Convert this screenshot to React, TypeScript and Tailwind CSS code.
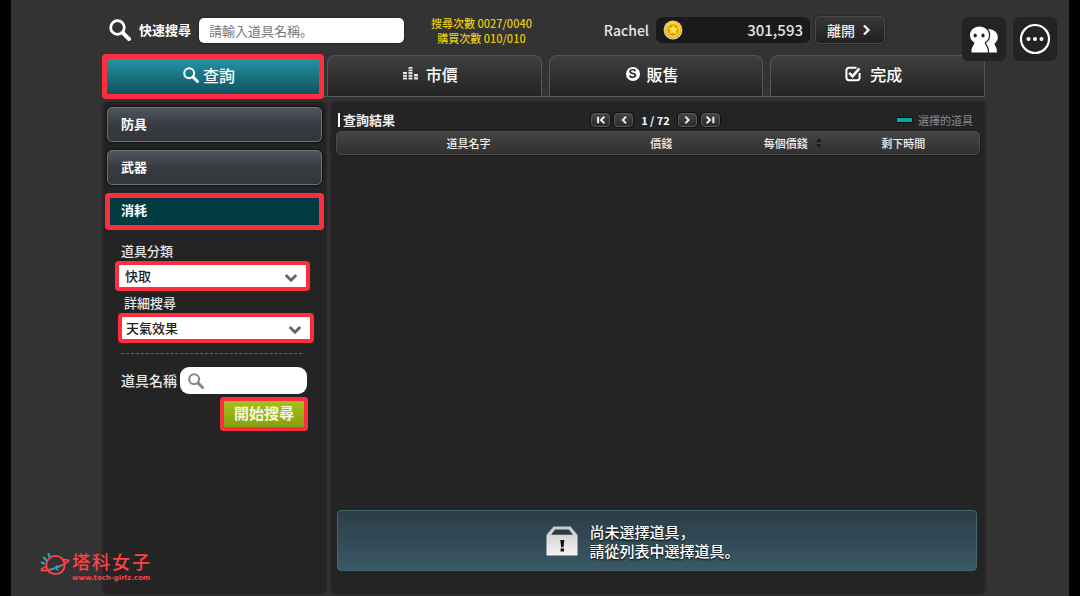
import { useState } from "react";
import type { ReactNode } from "react";

const panelShadow = "bg-[#242424] rounded-md shadow-[0_0_3px_#1a1a1a]";

function SearchIcon({ className }: { className: string }) {
  return (
    <svg viewBox="0 0 22 22" fill="none" stroke="currentColor" className={className} aria-hidden="true">
      <circle cx="8.5" cy="8.5" r="6.8" strokeWidth="2.8" />
      <path d="M13.6 13.6 20 20" strokeWidth="4" strokeLinecap="round" />
    </svg>
  );
}

function BarsIcon() {
  return (
    <svg viewBox="0 0 16 14" className="h-3.5 w-4 fill-[#e4e4e4]" aria-hidden="true">
      <path d="M0 5h4v2H0zM0 7.8h4v2H0zM0 10.6h4v2H0zM5.5 0h4v1.8h-4zM5.5 2.5h4v1.8h-4zM5.5 5h4v2h-4zM5.5 7.8h4v2h-4zM5.5 10.6h4v2h-4zM11 7h4v2.4h-4zM11 10.2h4v2.4h-4z" />
    </svg>
  );
}

function SaleIcon() {
  return (
    <span className="flex size-3.5 items-center justify-center rounded-full bg-white font-['Liberation_Sans',sans-serif] text-[12px] leading-3 font-bold text-[#222]">
      S
    </span>
  );
}

function CheckIcon() {
  return (
    <svg viewBox="0 0 16 16" fill="none" stroke="#fff" className="size-4" aria-hidden="true">
      <path d="M11.5 1.8H4A2.6 2.6 0 0 0 1.4 4.4v7.2A2.6 2.6 0 0 0 4 14.2h8a2.6 2.6 0 0 0 2.6-2.6V7" strokeWidth="2" />
      <path d="M4.2 6.8 7.6 10.4 14.4 2.4" strokeWidth="2.6" />
    </svg>
  );
}

function CoinIcon() {
  return (
    <svg viewBox="0 0 20 20" className="size-5" aria-hidden="true">
      <circle cx="10" cy="10" r="9.4" fill="#dcdcc8" />
      <circle cx="10" cy="10" r="8.5" fill="#f3a400" />
      <circle cx="10" cy="9.6" r="7.6" fill="#ffd93a" />
      <circle cx="10" cy="10" r="6" fill="#e99a0c" />
      <path d="m10.6 4.4 1.3 3.3 3.6.5-2.7 2.4.6 3.8-3.3-1.9-3.4 1.6.9-3.6-2.4-2.7 3.6-.3z" fill="#ffe052" />
    </svg>
  );
}

function FriendsIcon() {
  return (
    <svg viewBox="0 0 30 28" className="h-7 w-[30px] fill-white" aria-hidden="true">
      <path d="M19.5 4c5.5 0 9.3 3.7 9.3 8.3 0 2.7-1.3 4.7-3.3 6.2.2 2.5 2.3 4.2 2.3 6.5v2.5H17V6z" />
      <path
        d="M10.500 1.500c5.500 0 9.500 3.800 9.500 8.600 0 3.400-1.700 6-4.400 7.400.4 2.700 3.200 4.500 3.200 7.500v2.500H2.500V25c0-3 2.500-4.800 2.900-7.500C2.700 16.100 1 13.500 1 10.100c0-4.800 4-8.600 9.500-8.600z"
        stroke="#222"
        strokeWidth="2.400"
        paintOrder="stroke"
      />
      <ellipse cx="6.200" cy="10.500" rx="1.600" ry="1.900" fill="#222" />
      <ellipse cx="14" cy="10.500" rx="1.600" ry="1.900" fill="#222" />
    </svg>
  );
}

function MoreIcon() {
  return (
    <svg viewBox="0 0 32 32" className="size-8 fill-white" aria-hidden="true">
      <circle cx="16" cy="16" r="14" fill="none" stroke="#fff" strokeWidth="2.2" />
      <circle cx="9.5" cy="16" r="2" />
      <circle cx="16" cy="16" r="2" />
      <circle cx="22.5" cy="16" r="2" />
    </svg>
  );
}

function BoxIcon() {
  return (
    <svg viewBox="0 0 32 30" className="h-[30px] w-8" aria-hidden="true">
      <defs>
        <linearGradient id="box" x1="0" y1="0" x2="0" y2="1">
          <stop offset="0" stopColor="#c9c9c9" />
          <stop offset="1" stopColor="#f4f4f4" />
        </linearGradient>
      </defs>
      <path d="M7.5.5h17L31.5 9v20.5H.5V9z" fill="url(#box)" />
      <path d="M9.2 3.5h13.6l4.2 5.3H5z" fill="#2b3e47" />
      <path d="M14.3 14h4l-.8 7.2h-2.400zM14.6 22.500h3.400v3h-3.400z" fill="#111" />
    </svg>
  );
}

function PlanetLogo() {
  return (
    <svg viewBox="0 0 30 26" fill="none" stroke="#ff4148" strokeWidth="1.8" strokeLinecap="round" className="h-[26px] w-[30px]" aria-hidden="true">
      <circle cx="15.5" cy="13" r="9.2" />
      <path d="M6.3 14.5 2 16.8c-1.1.8-.6 1.9.9 1.9 6.5.2 18-3.8 25.2-9.2 1-.9.5-1.7-.8-1.7l-4-.1" />
      <path d="m1.8 10.5 2.4 1M3.8 5.6l2.5 2.6M8.5 2l1.2 3" stroke="#21a4c4" strokeWidth="2.2" />
      <path d="m12 17 4-1.2 3.5-1.4M16 15.8l1.6 2M16.4 15.6l.2-1.8" stroke="#21a4c4" />
    </svg>
  );
}

function Chevron({ className, d = "m3 1.5 4.5 4.5L3 10.5" }: { className: string; d?: string }) {
  return (
    <svg viewBox="0 0 12 12" fill="none" stroke="currentColor" strokeWidth="2.4" className={className} aria-hidden="true">
      <path d={d} />
    </svg>
  );
}

const tabs: { id: string; label: string; icon: ReactNode }[] = [
  { id: "search", label: "查詢", icon: <SearchIcon className="size-4" /> },
  { id: "price", label: "市價", icon: <BarsIcon /> },
  { id: "sell", label: "販售", icon: <SaleIcon /> },
  { id: "done", label: "完成", icon: <CheckIcon /> },
];

const tabGap: Record<string, string> = { search: "gap-1", price: "gap-[7px]", sell: "gap-[7px]", done: "gap-[9px]" };

const categories = ["防具", "武器", "消耗"];

const pagerIcons = [
  { label: "第一頁", d: "M2.5 2v8M10 2 6 6l4 4" },
  { label: "上一頁", d: "M8.5 2l-4 4 4 4" },
  { label: "下一頁", d: "m4 2 4 4-4 4" },
  { label: "最後一頁", d: "m2 2 4 4-4 4M10 2v8" },
];

function PagerButton({ label, d }: { label: string; d: string }) {
  return (
    <button
      aria-label={label}
      className="flex h-3.5 w-[19px] items-center justify-center rounded-sm border border-[#595959] bg-linear-to-b from-[#444] to-[#2a2a2a] text-[#eee] shadow-[0_0_1px_1px_#111]"
    >
      <Chevron className="size-2.5" d={d} />
    </button>
  );
}

function SelectField({ id, label, option, labelClass, boxClass }: {
  id: string;
  label: string;
  option: string;
  labelClass: string;
  boxClass: string;
}) {
  return (
    <>
      <label htmlFor={id} className={`block text-[13px] leading-5 font-medium text-[#e6e6e6] ${labelClass}`}>
        {label}
      </label>
      <div className={`relative rounded-sm border-4 border-[#ff2e3f] bg-white ${boxClass}`}>
        <select id={id} className="block h-[22px] w-full appearance-none bg-white text-[13px] leading-5 font-medium text-[#222] outline-none">
          <option>{option}</option>
        </select>
        <Chevron className="pointer-events-none absolute top-1.5 right-2 size-3.5 text-[#666]" d="m1.5 3.5 4.5 4.5 4.5-4.5" />
      </div>
    </>
  );
}

function Header() {
  return (
    <header className="flex h-[54px] items-start pt-4 pr-[100px] pl-[7px]">
      <label htmlFor="quick" className="flex h-7 items-center gap-2 text-[13px] font-bold whitespace-nowrap text-white">
        <SearchIcon className="size-[22px]" />
        快速搜尋
      </label>
      <input
        id="quick"
        placeholder="請輸入道具名稱。"
        className="mt-0.5 ml-2 h-[25px] w-[205px] rounded-[5px] bg-white px-2.5 text-[13px] text-[#222] shadow-[0_0_2px_#111] outline-none placeholder:text-[#777]"
      />
      <p className="ml-[27px] text-center text-[11px] leading-[15px] font-medium whitespace-nowrap text-[#e5c90e]">
        搜尋次數 0027/0040
        <br />
        購買次數 010/010
      </p>
      <div className="ml-auto flex items-center">
        <span className="mr-[7px] text-[14px] leading-7 font-medium text-[#e6e6e6]">Rachel</span>
        <div className="flex h-[26px] w-[154px] items-center justify-between rounded-md bg-[#1a1a1a] px-[7px] text-[15px] font-medium text-[#e6e6e6]">
          <CoinIcon />
          301,593
        </div>
        <button className="ml-[5px] flex h-7 w-[70px] items-center justify-center gap-1.5 rounded-sm border border-[#484848] bg-linear-to-b from-[#373737] to-[#202020] text-[14px] font-medium text-[#eee] shadow-[0_0_2px_#151515]">
          離開
          <Chevron className="size-3" />
        </button>
      </div>
    </header>
  );
}

function Sidebar({ category, onSelect }: { category: string; onSelect: (name: string) => void }) {
  return (
    <aside className={`w-[223px] shrink-0 pt-[5px] ${panelShadow}`}>
      <div className="flex flex-col gap-2">
        {categories.map((name) => (
          <button
            key={name}
            onClick={() => onSelect(name)}
            className={`text-left text-[13px] font-bold text-white ${
              name === category
                ? "mx-0.5 h-[37px] rounded-sm border-[5px] border-[#ff2e3f] bg-[#033b42] pb-1 pl-[11px]"
                : "mx-1 h-[35px] rounded-[5px] border border-[#6c7177] bg-linear-to-b from-[#50555c] via-[#383c42] to-[#33373c] pb-0.5 pl-[13px] shadow-[0_0_2px_1px_#111]"
            }`}
          >
            {name}
          </button>
        ))}
      </div>
      <form className="pt-[11px]" onSubmit={(e) => e.preventDefault()}>
        <SelectField id="kind" label="道具分類" option="快取" labelClass="ml-[18px]" boxClass="mr-4 ml-3 mb-0.5 pl-1.5" />
        <SelectField id="detail" label="詳細搜尋" option="天氣效果" labelClass="ml-[21px]" boxClass="mr-3 ml-[15px] pl-1" />
        <hr className="mt-[10px] mr-6 ml-[18px] border-t border-dashed border-[#666]" />
        <div className="mt-[13px] mr-[19px] ml-[18px] flex items-center gap-[3px]">
          <label htmlFor="item" className="text-[14px] font-medium whitespace-nowrap text-[#e6e6e6]">
            道具名稱
          </label>
          <div className="flex h-[27px] min-w-0 flex-1 items-center rounded-[9px] bg-white px-2">
            <SearchIcon className="size-4 shrink-0 text-[#888]" />
            <input id="item" className="w-full min-w-0 px-2 text-[13px] text-[#222] outline-none" />
          </div>
        </div>
        <button className="mt-[3px] mr-[18px] ml-auto block h-[34px] w-[88px] rounded-sm border-4 border-[#ff2e3f] bg-linear-to-b from-[#a6c11c] to-[#86a010] pb-0.5 text-[15px] leading-6 font-bold whitespace-nowrap text-[#f4f7dc]">
          開始搜尋
        </button>
      </form>
    </aside>
  );
}

function Results() {
  return (
    <main className={`flex min-w-0 flex-1 flex-col pt-2 ${panelShadow}`}>
      <div className="grid grid-cols-[1fr_auto_1fr] items-center pr-3 pl-[7px]">
        <h2 className="flex items-center gap-[3px] text-[13px] leading-5 font-bold text-[#eee]">
          <span className="h-3.5 w-0.5 bg-white" />
          查詢結果
        </h2>
        <div className="flex items-center gap-1">
          {pagerIcons.slice(0, 2).map((p) => (
            <PagerButton key={p.label} {...p} />
          ))}
          <span className="mx-1 text-[11px] leading-5 font-bold text-white">1 / 72</span>
          {pagerIcons.slice(2).map((p) => (
            <PagerButton key={p.label} {...p} />
          ))}
        </div>
        <p className="flex items-center justify-end gap-[5px] text-[11px] leading-5 text-[#8b8b8b]">
          <span className="h-1.5 w-[17px] border border-[#111] bg-[#08a3a6]" />
          選擇的道具
        </p>
      </div>
      <div className="mt-px mr-[5px] ml-[5px] rounded-[5px] border border-[#4c4c4c] bg-linear-to-b from-[#444] to-[#313131] shadow-[0_0_2px_#111]">
        <table className="w-full table-fixed text-[11px] leading-[22px] text-[#eee]">
          <thead>
            <tr>
              <th className="w-[41%] font-medium">道具名字</th>
              <th className="w-[19%] font-medium">價錢</th>
              <th className="w-[22%] font-medium">
                <button className="inline-flex items-center gap-2">
                  每個價錢
                  <svg viewBox="0 0 6 10" className="h-2.5 w-1.5 fill-[#1c1c1c]" aria-hidden="true">
                    <path d="M0 4 3 0l3 4zM0 6l3 4 3-4z" />
                  </svg>
                </button>
              </th>
              <th className="w-[18%] pr-9 font-medium">剩下時間</th>
            </tr>
          </thead>
        </table>
      </div>
      <div className="mr-2 ml-1.5 mt-auto mb-[23px] flex h-[61px] items-center justify-center gap-[11px] rounded-sm border border-[#42656f] bg-linear-to-b from-[#2b3d46] to-[#3a5866] pr-7">
        <BoxIcon />
        <p className="text-[15px] leading-[19px] font-medium text-white [text-shadow:0_1px_2px_#000]">
          尚未選擇道具，
          <br />
          請從列表中選擇道具。
        </p>
      </div>
    </main>
  );
}

export default function App() {
  const [tab, setTab] = useState("search");
  const [category, setCategory] = useState("消耗");

  return (
    <div className="min-h-screen bg-black px-[11px] font-['Noto_Sans_CJK_JP','Noto_Sans_CJK_TC',sans-serif]">
      <div className="relative flex min-h-screen flex-col bg-[#333] pr-[84px] pl-[91px]">
        <Header />
        <nav className="flex h-[43px] items-end gap-[7px] border-b border-[#5c5c5c]">
          {tabs.map(({ id, label, icon }) => (
            <button
              key={id}
              onClick={() => setTab(id)}
              className={`flex items-center justify-center pr-2 text-[16px] font-medium text-white ${tabGap[id]} ${
                id === tab
                  ? "-mr-1 -mb-[3px] h-[45px] w-[222px] rounded-sm border-[5px] border-[#ff2e3f] bg-linear-to-b from-[#2296a6] to-[#10525f] pb-1"
                  : "h-[41px] flex-1 rounded-t-lg border border-b-0 border-[#555] bg-linear-to-b from-[#404040] to-[#232323] pb-1"
              }`}
            >
              {icon}
              {label}
            </button>
          ))}
        </nav>
        <div className="flex flex-1 gap-[5px] pt-[5px] pb-0.5 pl-px">
          <Sidebar category={category} onSelect={setCategory} />
          <Results />
        </div>
        <div className="absolute top-[17px] right-3 flex gap-[7px]">
          <button aria-label="好友" className="flex size-11 items-center justify-center rounded-md bg-[#232323]">
            <FriendsIcon />
          </button>
          <button aria-label="更多" className="flex size-11 items-center justify-center rounded-md bg-[#232323]">
            <MoreIcon />
          </button>
        </div>
        <a href="#" className="absolute bottom-3.5 left-[29px] flex items-center gap-0.5 text-[#ff4148]">
          <PlanetLogo />
          <span className="flex flex-col">
            <span className="flex justify-between text-[18px] leading-[26px] font-medium">
              {[..."塔科女子"].map((c) => (
                <span key={c}>{c}</span>
              ))}
            </span>
            <span className="font-['DejaVu_Sans',sans-serif] text-[7px] leading-2 font-bold">www.tech-girlz.com</span>
          </span>
        </a>
      </div>
    </div>
  );
}
